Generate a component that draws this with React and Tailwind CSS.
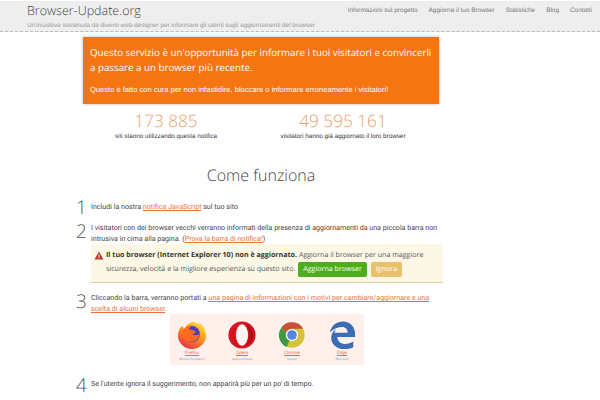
import React from "react";

const NAV = ["Informazioni sul progetto", "Aggiorna il tuo Browser", "Statistiche", "Blog", "Contatti"];

const linkCls = "text-[#e8703a] underline";

const Firefox = () => (
  <svg viewBox="0 0 32 32" className="h-[30px] w-[30px]">
    <defs>
      <linearGradient id="ff" x1="0.8" y1="0" x2="0.2" y2="1">
        <stop offset="0" stopColor="#ffe03a" />
        <stop offset="0.5" stopColor="#ff8a1e" />
        <stop offset="1" stopColor="#e8264a" />
      </linearGradient>
    </defs>
    <path d="M16 2C24 2 31 9 31 17c0 7-7 14-15 14S1 24 1 17C1 12 3 8 6 6c0 2 1 3 2 3 2-4 5-6 8-7z" fill="url(#ff)" />
    <circle cx="16" cy="15" r="8.500" fill="#4a3fb5" />
    <path d="M7 10c2-3 6-5 9-4-2 1-3 2-3 4 3 0 6 1 7 3-1 1-2 2-4 2 2 2 6 2 8-1 0 5-4 9-9 9-7 0-11-7-8-13z" fill="#ff6a1f" />
    <path d="M24 3c4 3 7 8 7 14-2-5-4-8-7-10z" fill="#ffd030" />
  </svg>
);

const Opera = () => (
  <svg viewBox="0 0 32 32" className="h-[30px] w-[30px]">
    <circle cx="16" cy="16" r="14.5" fill="#d5141f" />
    <ellipse cx="16" cy="16" rx="6.5" ry="11.5" fill="#fff5f2" />
    <path d="M20 4.500c4 1.500 8 6 8 11.500s-4 10-8 11.500c2.500-2.500 4-7 4-11.500s-1.500-9-4-11.500z" fill="#a80f1a" />
  </svg>
);

const Chrome = () => (
  <svg viewBox="0 0 32 32" className="h-[28px] w-[28px]">
    <circle cx="16" cy="16" r="14.500" fill="#d5c33a" />
    <path d="M16 1.500a14.500 14.500 0 0 1 12.600 7.250H16a7.250 7.250 0 0 0-6.600 4.300L4 7.500A14.500 14.500 0 0 1 16 1.500z" fill="#c9503c" />
    <path d="M4 7.500l5.400 5.500a7.250 7.250 0 0 0 3.600 9.500l-3 7.200A14.500 14.500 0 0 1 4 7.500z" fill="#3f9a48" />
    <circle cx="16" cy="16" r="7" fill="#fff" />
    <circle cx="16" cy="16" r="5.500" fill="#5a82e0" />
  </svg>
);

const Edge = () => (
  <svg viewBox="0 0 32 32" className="h-[30px] w-[30px]">
    <path
      d="M3 13C5 5 11 1.500 17 1.500c8 0 13 6 13 13.500v3H11c.3 5 4 7.500 8.500 7.500 3 0 6-1 8.500-2.500v6c-3 1.500-6 2-9.500 2C9.500 31 4 25 4.500 18c.3-3 2-6 5-8.500-.8 1.500-1.200 2.800-1.500 4h14c0-3.500-2-6-6-6C12 7.500 7 9.500 3 13z"
      fill="#3a6db5"
    />
  </svg>
);

const BROWSERS = [
  { name: "Firefox", by: "Mozilla Foundation", icon: <Firefox /> },
  { name: "Opera", by: "Opera Software", icon: <Opera /> },
  { name: "Chrome", by: "Google", icon: <Chrome /> },
  { name: "Edge", by: "Microsoft", icon: <Edge /> },
];

const Step = ({ n, className, children }) => (
  <div className={`-mr-[4px] flex ${className}`}>
    <div className="w-[15px] -ml-[7px] shrink-0 font-['Open_Sans',sans-serif] font-light text-[19px] leading-[19px] text-[#555]">
      {n}
    </div>
    <div className="min-w-0 flex-1">{children}</div>
  </div>
);

export default function App() {
  return (
    <div className="h-[400px] w-[600px] overflow-hidden bg-white font-['Roboto',Arial,sans-serif] text-[7.1px] leading-[11px] text-[#444] [text-rendering:geometricPrecision]">
      {/* header */}
      <header className="mt-px h-[31px] border-b border-dashed border-[#bbb] bg-[#eee] pl-[27px] pr-[8px]">
        <div className="flex items-start justify-between">
          <div className="font-['Open_Sans',sans-serif] font-light text-[12.500px] leading-[20px] text-[#444]">
            Browser-Update.org
          </div>
          <nav className="mt-[4px] flex gap-[11px] font-['Liberation_Sans',sans-serif] text-[6.400px] text-[#777]">
            {NAV.map((item) => (
              <span key={item}>{item}</span>
            ))}
          </nav>
        </div>
        <div className="font-['Liberation_Sans',sans-serif] text-[#999] text-[6.350px] leading-[9px]">
          Un'iniziativa sostenuta da diversi web-designer per informare gli utenti sugli aggiornamenti del browser
        </div>
      </header>

      <main className="ml-[83px] w-[356px]">
        {/* orange box */}
        <div className="mt-[5px] h-[67px] bg-[#f47511] px-[7px] pt-[8px] text-white shadow-[0_0_3px_rgba(0,0,0,0.3)]">
          <p className="font-['Open_Sans',sans-serif] text-[9.750px] leading-[15px]">
            Questo servizio è un'opportunità per informare i tuoi visitatori e convincerli a passare a un browser più recente.
          </p>
          <p className="mt-[9px] font-['Liberation_Sans',sans-serif] text-[7.550px] leading-[11px]">
            Questo è fatto con cura per non infastidire, bloccare o informare erroneamente i visitatori!
          </p>
        </div>

        {/* counters */}
        <div className="mt-[7px] flex">
          <div className="w-[166px] text-center">
            <div className="font-['Open_Sans',sans-serif] font-light text-[17.200px] leading-[22px] text-[#e8a070]">173 885</div>
            <div className="font-['Liberation_Sans',sans-serif] text-[#333] text-[6.300px] leading-[8px]">siti stanno utilizzando questa notifica</div>
          </div>
          <div className="ml-[6px] w-[176px] text-center">
            <div className="font-['Open_Sans',sans-serif] font-light text-[17.200px] leading-[22px] text-[#e8a070]">49 595 161</div>
            <div className="font-['Liberation_Sans',sans-serif] text-[#333] text-[6.300px] leading-[8px]">visitatori hanno già aggiornato il loro browser</div>
          </div>
        </div>

        <h1 className="mt-[22px] text-center font-['Open_Sans',sans-serif] font-light text-[16px] leading-[25px] text-[#444]">
          Come funziona
        </h1>

        {/* steps */}
        <Step n="1" className="mt-[10px]">
          <p className="pt-[3px]">
            Includi la nostra <span className={linkCls}>notifica JavaScript</span> sul tuo sito
          </p>
        </Step>

        <Step n="2" className="mt-[5px]">
          <p>
            I visitatori con dei browser vecchi verranno informati della presenza di aggiornamenti da una piccola barra non intrusiva in cima alla pagina. (<span className={linkCls}>Prova la barra di notifica!</span>)
          </p>
          <div className="h-[39px] border-b border-[#e0cf9a] bg-[#fdf8e6] pl-[15px] pr-[5px] pt-[6px] font-['Open_Sans',sans-serif] text-[7.100px] leading-[11px] text-[#555]">
            <div className="relative">
              <svg viewBox="0 0 12 11" className="absolute -left-[12px] top-[1px] h-[9px] w-[10px]">
                <path d="M6 .5L11.500 10.500H.5z" fill="#c0392b" />
                <path d="M5.500 4h1v3.500h-1zM5.500 8h1v1h-1z" fill="#fff" />
              </svg>
              <b className="text-[#333]">Il tuo browser (Internet Explorer 10) non è aggiornato.</b> Aggiorna il browser per una maggiore
            </div>
            <div className="mt-[1px] flex items-center">
              <span className="whitespace-nowrap">sicurezza, velocità e la migliore esperienza su questo sito.</span>
              <span className="ml-[3px] rounded-[2px] bg-[#4cae1e] px-[5px] leading-[15px] text-white whitespace-nowrap">Aggiorna browser</span>
              <span className="ml-[4px] rounded-[2px] bg-[#e8c06e] px-[5px] leading-[15px] text-white">Ignora</span>
            </div>
          </div>
        </Step>

        <Step n="3" className="mt-[9px]">
          <p>
            Cliccando la barra, verranno portati a <span className={linkCls}>una pagina di informazioni con i motivi per cambiare/aggiornare e una scelta di alcuni browser</span>.
          </p>
          <div className="ml-[79px] flex h-[51px] w-[194px] justify-between bg-[#fff0ec] px-[4px] pt-[5px]">
            {BROWSERS.map((b) => (
              <div key={b.name} className="flex w-[36px] flex-col items-center">
                <div className="flex h-[31px] items-center">{b.icon}</div>
                <span className="mt-[1px] text-[4.500px] leading-[6px] text-[#e8703a] underline">{b.name}</span>
                <span className="text-[3px] leading-[4px] text-[#999]">{b.by}</span>
              </div>
            ))}
          </div>
        </Step>

        <Step n="4" className="mt-[11px]">
          <p className="pt-[2px]">Se l'utente ignora il suggerimento, non apparirà più per un po' di tempo.</p>
        </Step>
      </main>
    </div>
  );
}
